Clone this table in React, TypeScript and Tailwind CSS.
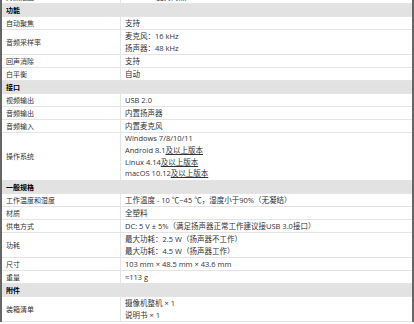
import React from "react";

type Line = React.ReactNode;

interface SpecRow {
  label: string;
  values: Line[];
  tight?: boolean;
}

interface Section {
  title?: string;
  rows: SpecRow[];
}

const U = ({ children }: { children: React.ReactNode }) => (
  <span className="underline decoration-[0.5px] underline-offset-[1px]">{children}</span>
);

const sections: Section[] = [
  {
    rows: [{ label: "对焦范围", values: ["0 - 3 m（支持对焦）"] }],
  },
  {
    title: "功能",
    rows: [
      { label: "自动聚焦", values: ["支持"] },
      { label: "音频采样率", values: ["麦克风：16 kHz", "扬声器：48 kHz"] },
      { label: "回声消除", values: ["支持"] },
      { label: "白平衡", values: ["自动"] },
    ],
  },
  {
    title: "接口",
    rows: [
      { label: "视频输出", values: ["USB 2.0"] },
      { label: "音频输出", values: ["内置扬声器"] },
      { label: "音频输入", values: ["内置麦克风"] },
      {
        label: "操作系统",
        tight: true,
        values: [
          "Windows 7/8/10/11",
          <>Android 8.1<U>及以上版本</U></>,
          <>Linux 4.14<U>及以上版本</U></>,
          <>macOS 10.12<U>及以上版本</U></>,
        ],
      },
    ],
  },
  {
    title: "一般规格",
    rows: [
      { label: "工作温度和湿度", values: ["工作温度 - 10 ℃~45 ℃，湿度小于90%（无凝结）"] },
      { label: "材质", values: ["全塑料"] },
      { label: "供电方式", values: ["DC: 5 V ± 5%（满足扬声器正常工作建议接USB 3.0接口）"] },
      { label: "功耗", values: ["最大功耗：2.5 W（扬声器不工作）", "最大功耗：4.5 W（扬声器工作）"] },
      { label: "尺寸", values: ["103 mm × 48.5 mm × 43.6 mm"] },
      { label: "重量", values: ["≈113 g"] },
    ],
  },
  {
    title: "附件",
    rows: [{ label: "装箱清单", values: ["摄像机整机 × 1", "说明书 × 1"] }],
  },
];

function Row({ row }: { row: SpecRow }) {
  return (
    <div className="flex border-b border-[#e4e4e4]">
      <div className="w-[119px] shrink-0 border-r border-[#e4e4e4] pl-[4px] flex items-center">
        {row.label}
      </div>
      <div
        className="flex-1 pl-[4px] text-[7.5px]"
        style={{ fontFamily: '"Open Sans", "Noto Sans CJK SC", sans-serif' }}
      >
        {row.values.map((v, i) => (
          <div
            key={i}
            className={`${row.tight ? "h-[11.75px] leading-[11.75px]" : "h-[12px] leading-[12px]"} whitespace-nowrap`}
          >
            {v}
          </div>
        ))}
      </div>
    </div>
  );
}

export default function App() {
  return (
    <div className="w-[414px] h-[324px] overflow-hidden bg-white">
      <div
        className="mt-[-9px] border-l-2 border-r-2 border-[#666] text-[7px] text-[#333]"
        style={{ fontFamily: '"Noto Sans CJK SC", sans-serif' }}
      >
        {sections.map((s, si) => (
          <div key={si}>
            {s.title && (
              <div className="h-[13px] leading-[12px] bg-[#e2e2e2] border-b border-[#e4e4e4] pl-[4px] font-bold text-black">
                {s.title}
              </div>
            )}
            {s.rows.map((r) => (
              <Row key={r.label} row={r} />
            ))}
          </div>
        ))}
      </div>
    </div>
  );
}
